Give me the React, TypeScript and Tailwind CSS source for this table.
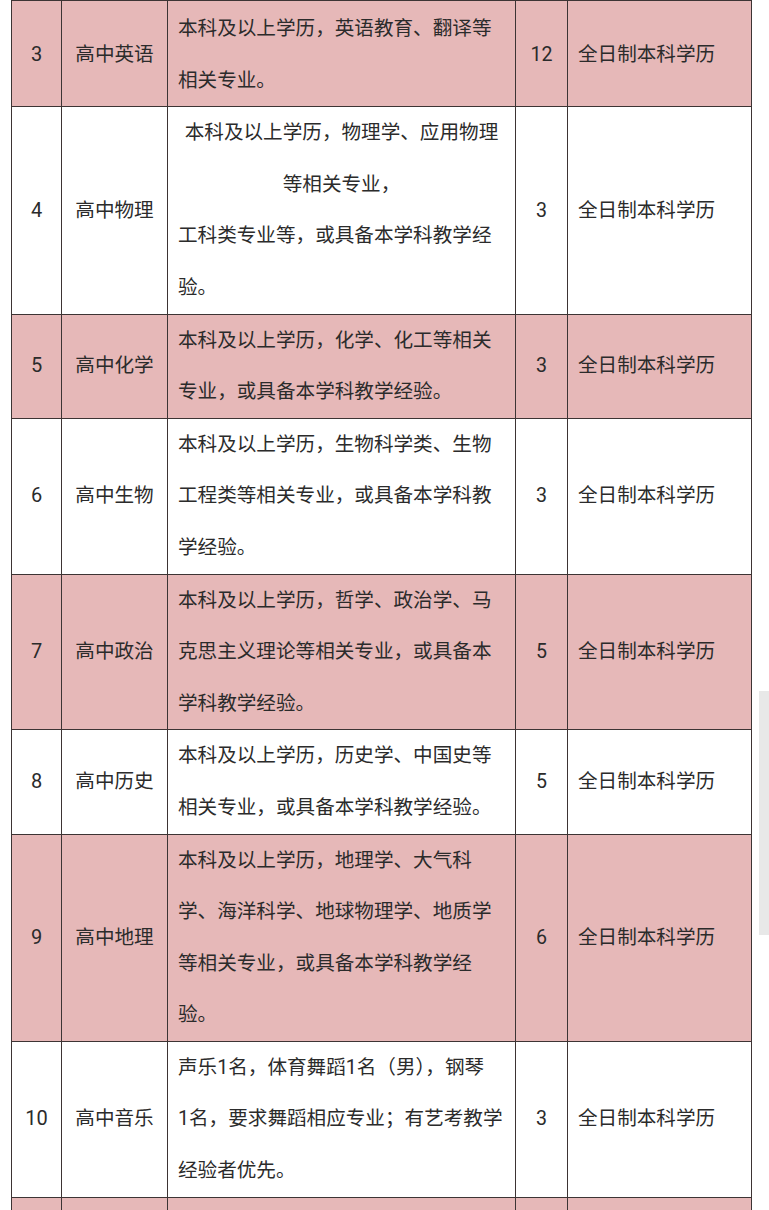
import React from "react";

type Row = {
  no: string;
  subject: string;
  desc: React.ReactNode;
  count: string;
  pink: boolean;
};

const lines = (arr: string[]) => (
  <>
    {arr.map((l, i) => (
      <div key={i} className="whitespace-nowrap">
        {l || "\u00a0"}
      </div>
    ))}
  </>
);

const rows: Row[] = [
  {
    no: "3",
    subject: "高中英语",
    desc: lines(["本科及以上学历，英语教育、翻译等", "相关专业。"]),
    count: "12",
    pink: true,
  },
  {
    no: "4",
    subject: "高中物理",
    desc: (
      <>
        <div className="whitespace-nowrap text-center">本科及以上学历，物理学、应用物理</div>
        <div className="whitespace-nowrap text-center">等相关专业，</div>
        <div className="whitespace-nowrap">工科类专业等，或具备本学科教学经</div>
        <div className="whitespace-nowrap">验。</div>
      </>
    ),
    count: "3",
    pink: false,
  },
  {
    no: "5",
    subject: "高中化学",
    desc: lines(["本科及以上学历，化学、化工等相关", "专业，或具备本学科教学经验。"]),
    count: "3",
    pink: true,
  },
  {
    no: "6",
    subject: "高中生物",
    desc: lines([
      "本科及以上学历，生物科学类、生物",
      "工程类等相关专业，或具备本学科教",
      "学经验。",
    ]),
    count: "3",
    pink: false,
  },
  {
    no: "7",
    subject: "高中政治",
    desc: lines([
      "本科及以上学历，哲学、政治学、马",
      "克思主义理论等相关专业，或具备本",
      "学科教学经验。",
    ]),
    count: "5",
    pink: true,
  },
  {
    no: "8",
    subject: "高中历史",
    desc: lines(["本科及以上学历，历史学、中国史等", "相关专业，或具备本学科教学经验。"]),
    count: "5",
    pink: false,
  },
  {
    no: "9",
    subject: "高中地理",
    desc: lines([
      "本科及以上学历，地理学、大气科",
      "学、海洋科学、地球物理学、地质学",
      "等相关专业，或具备本学科教学经",
      "验。",
    ]),
    count: "6",
    pink: true,
  },
  {
    no: "10",
    subject: "高中音乐",
    desc: lines([
      "声乐1名，体育舞蹈1名（男），钢琴",
      "1名，要求舞蹈相应专业；有艺考教学",
      "经验者优先。",
    ]),
    count: "3",
    pink: false,
  },
  {
    no: "",
    subject: "",
    desc: lines(["", ""]),
    count: "",
    pink: true,
  },
];

export default function App() {
  return (
    <div
      className="relative h-[1210px] w-[769px] overflow-hidden bg-white text-[#2b2b2b]"
      style={{ fontFamily: 'Roboto, "Noto Sans CJK SC", sans-serif' }}
    >
      <div className="pl-[11px]">
        <table className="w-[740px] table-fixed border-collapse text-[19.6px] leading-[51.6px]">
          <colgroup>
            <col className="w-[50px]" />
            <col className="w-[106px]" />
            <col className="w-[348px]" />
            <col className="w-[52px]" />
            <col className="w-[184px]" />
          </colgroup>
          <tbody>
            {rows.map((r, i) => {
              const pt = i === 0 ? "pt-[2px]" : "pt-0";
              return (
                <tr key={i} className={r.pink ? "bg-[#e6b8b8]" : "bg-white"}>
                  <td className={`border border-[#3d3434] ${pt} pb-0 px-0 text-center align-middle text-[20px]`}>
                    {r.no}
                  </td>
                  <td className={`border border-[#3d3434] ${pt} pb-0 px-0 text-center align-middle`}>
                    {r.subject}
                  </td>
                  <td className={`border border-[#3d3434] ${pt} pb-0 pl-[10px] pr-[10px] align-middle`}>
                    {r.desc}
                  </td>
                  <td className={`border border-[#3d3434] ${pt} pb-0 px-0 text-center align-middle`}>
                    {r.count}
                  </td>
                  <td className={`border border-[#3d3434] ${pt} pb-0 pl-[10px] pr-0 align-middle whitespace-nowrap`}>
                    {r.no ? "全日制本科学历" : ""}
                  </td>
                </tr>
              );
            })}
          </tbody>
        </table>
      </div>
      <div className="absolute left-[759px] top-[691px] h-[244px] w-[10px] bg-[#e8e8e8]" />
    </div>
  );
}
